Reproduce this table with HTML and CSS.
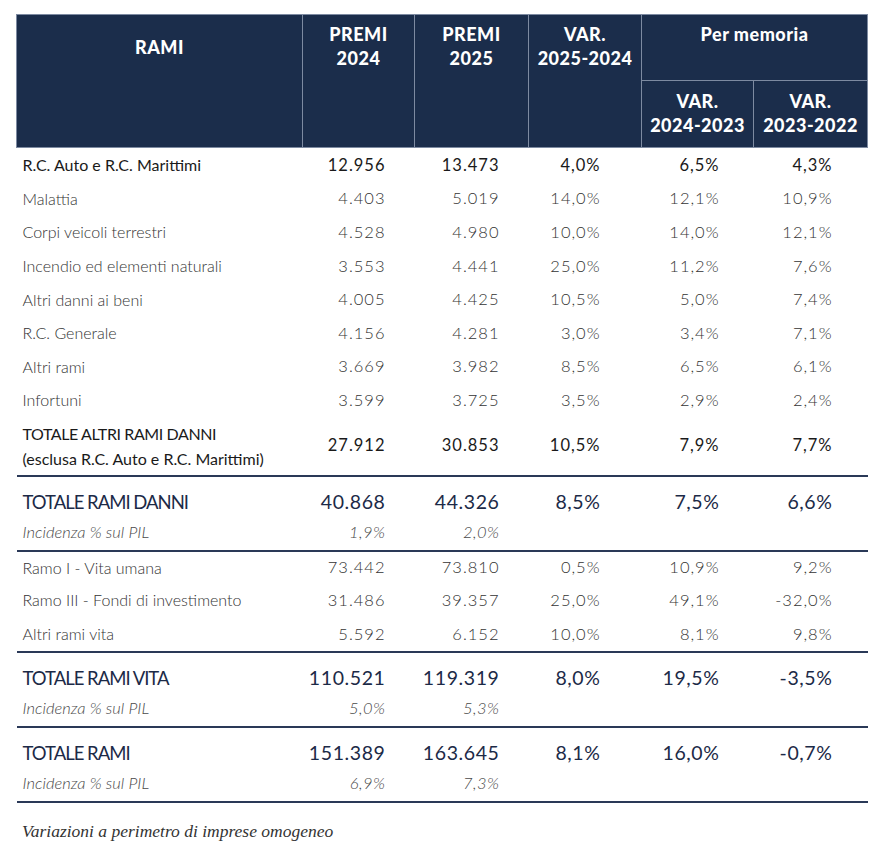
FILE: index.html
```html
<!DOCTYPE html>
<html lang="it">
<head>
<meta charset="utf-8">
<title>Premi</title>
<link rel="stylesheet" href="styles.css">
</head>
<body>
<div class="page">
<table class="premi">
  <colgroup>
    <col class="c-label"><col class="c2"><col class="c3"><col class="c4"><col class="c5"><col class="c6">
  </colgroup>
  <thead>
    <tr class="h1">
      <th rowspan="2" class="h-rami">RAMI</th>
      <th rowspan="2">PREMI<br>2024</th>
      <th rowspan="2">PREMI<br>2025</th>
      <th rowspan="2">VAR.<br>2025-2024</th>
      <th colspan="2" class="h-memo">Per memoria</th>
    </tr>
    <tr class="h2">
      <th>VAR.<br>2024-2023</th>
      <th>VAR.<br>2023-2022</th>
    </tr>
  </thead>
  <tbody class="sec-danni">
    <tr class="strong"><td>R.C. Auto e R.C. Marittimi</td><td>12.956</td><td>13.473</td><td>4,0%</td><td>6,5%</td><td>4,3%</td></tr>
    <tr><td>Malattia</td><td>4.403</td><td>5.019</td><td>14,0%</td><td>12,1%</td><td>10,9%</td></tr>
    <tr><td>Corpi veicoli terrestri</td><td>4.528</td><td>4.980</td><td>10,0%</td><td>14,0%</td><td>12,1%</td></tr>
    <tr><td>Incendio ed elementi naturali</td><td>3.553</td><td>4.441</td><td>25,0%</td><td>11,2%</td><td>7,6%</td></tr>
    <tr><td>Altri danni ai beni</td><td>4.005</td><td>4.425</td><td>10,5%</td><td>5,0%</td><td>7,4%</td></tr>
    <tr><td>R.C. Generale</td><td>4.156</td><td>4.281</td><td>3,0%</td><td>3,4%</td><td>7,1%</td></tr>
    <tr><td>Altri rami</td><td>3.669</td><td>3.982</td><td>8,5%</td><td>6,5%</td><td>6,1%</td></tr>
    <tr><td>Infortuni</td><td>3.599</td><td>3.725</td><td>3,5%</td><td>2,9%</td><td>2,4%</td></tr>
    <tr class="strong two"><td><span class="main">TOTALE ALTRI RAMI DANNI</span><br><span class="sub">(esclusa R.C. Auto e R.C. Marittimi)</span></td><td>27.912</td><td>30.853</td><td>10,5%</td><td>7,9%</td><td>7,7%</td></tr>
  </tbody>
  <tbody class="total">
    <tr class="tot"><td>TOTALE RAMI DANNI</td><td>40.868</td><td>44.326</td><td>8,5%</td><td>7,5%</td><td>6,6%</td></tr>
    <tr class="inc"><td>Incidenza % sul PIL</td><td>1,9%</td><td>2,0%</td><td></td><td></td><td></td></tr>
  </tbody>
  <tbody class="sec-vita">
    <tr class="r-first"><td>Ramo I - Vita umana</td><td>73.442</td><td>73.810</td><td>0,5%</td><td>10,9%</td><td>9,2%</td></tr>
    <tr class="r-mid"><td>Ramo III - Fondi di investimento</td><td>31.486</td><td>39.357</td><td>25,0%</td><td>49,1%</td><td>-32,0%</td></tr>
    <tr class="r-last"><td>Altri rami vita</td><td>5.592</td><td>6.152</td><td>10,0%</td><td>8,1%</td><td>9,8%</td></tr>
  </tbody>
  <tbody class="total">
    <tr class="tot"><td>TOTALE RAMI VITA</td><td>110.521</td><td>119.319</td><td>8,0%</td><td>19,5%</td><td>-3,5%</td></tr>
    <tr class="inc"><td>Incidenza % sul PIL</td><td>5,0%</td><td>5,3%</td><td></td><td></td><td></td></tr>
  </tbody>
  <tbody class="total">
    <tr class="tot"><td>TOTALE RAMI</td><td>151.389</td><td>163.645</td><td>8,1%</td><td>16,0%</td><td>-0,7%</td></tr>
    <tr class="inc"><td>Incidenza % sul PIL</td><td>6,9%</td><td>7,3%</td><td></td><td></td><td></td></tr>
  </tbody>
</table>
<p class="note">Variazioni a perimetro di imprese omogeneo</p>
</div>
</body>
</html>
```
FILE: styles.css
```css
html, body {
  margin: 0;
  padding: 0;
  background: #ffffff;
}
.page {
  padding: 14px 0 0 16px;
}
.premi {
  width: 851px;
  border-collapse: collapse;
  table-layout: fixed;
  font-family: "Lato", "Open Sans", sans-serif;
}
.c-label { width: 286px; }
.c2 { width: 112px; }
.c3 { width: 114px; }
.c4 { width: 113px; }
.c5 { width: 112px; }
.c6 { width: 114px; }

/* header */
.premi thead th {
  background: #1b2d4b;
  color: #ffffff;
  font-weight: 900;
  font-size: 18px;
  line-height: 24px;
  text-align: center;
  vertical-align: top;
  border: 1px solid #7d8aa1;
  padding: 7px 0 0 0;
  letter-spacing: 0.5px;
}
.premi thead .h1 { height: 66px; }
.premi thead .h2 { height: 67px; }
.premi thead .h-rami { padding-top: 20px; }
.premi thead .h2 th { padding-top: 8px; }

/* body */
.premi td {
  padding: 0 36px 0 0;
  text-align: right;
  font-size: 16.5px;
  font-weight: 300;
  color: #333333;
  height: 33.6px;
  white-space: nowrap;
  vertical-align: middle;
  letter-spacing: 1px;
}
.premi td:first-child {
  text-align: left;
  padding: 0 0 0 6px;
  font-size: 16px;
  letter-spacing: 0;
}
.premi td:nth-child(2) { padding-right: 29px; }
.premi td:nth-child(3) { padding-right: 29px; }
.premi td:nth-child(4) { padding-right: 41px; }
.premi td:nth-child(5) { padding-right: 34px; }
.premi td:nth-child(6) { padding-right: 35px; }

.premi tr.strong td {
  font-weight: 400;
  color: #1a1a1a;
}
.premi tr.two td {
  height: 58px;
  line-height: 25px;
}
.premi tr.two .main {
  letter-spacing: -0.4px;
}
.premi tr.two .sub {
  font-size: 16px;
}

.sec-danni,
.sec-vita,
.total {
  border-bottom: 2px solid #2a3957;
}
.premi tr.tot td {
  font-size: 19.5px;
  font-weight: 400;
  color: #1c2a47;
  height: 34px;
  padding-top: 8px;
  line-height: 34px;
  letter-spacing: 0.6px;
}
.premi tr.tot td:first-child {
  font-size: 18.5px;
  letter-spacing: -1px;
}
.premi tr.inc td {
  font-style: italic;
  font-weight: 300;
  color: #4a4a4a;
  font-size: 16.5px;
  height: 26px;
  padding-bottom: 5px;
  line-height: 26px;
  letter-spacing: 0.5px;
}
.premi tr.inc td:first-child {
  font-size: 16.5px;
  letter-spacing: 0;
}
.premi tr.r-first td { height: 31px; }
.premi tr.r-mid td { height: 33.5px; }
.premi tr.r-last td { height: 35px; }

.note {
  margin: 18px 0 0 6px;
  font-family: "Liberation Serif", "Times New Roman", serif;
  font-style: italic;
  font-size: 17.5px;
  color: #333333;
}
```
